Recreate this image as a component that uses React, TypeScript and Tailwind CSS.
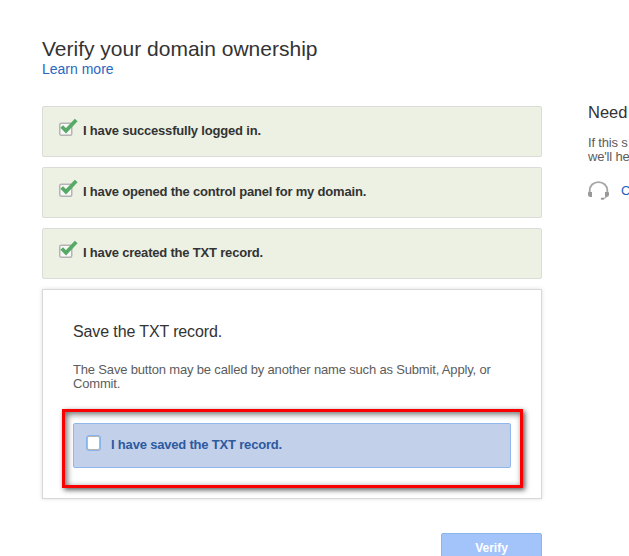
import React from 'react';

const completedSteps = [
  'I have successfully logged in.',
  'I have opened the control panel for my domain.',
  'I have created the TXT record.',
];

const CheckedBox: React.FC = () => (
  <svg className="h-[19px] w-[20px] shrink-0" viewBox="0 0 20 19" fill="none">
    <rect x="1.75" y="5.25" width="12" height="12" rx="1.5" fill="#f8f8f7" stroke="#b4b4b4" strokeWidth="1.5" />
    <path d="M3.7 8.5L8 12.8L18.2 2" stroke="#57a966" strokeWidth="3.8" />
  </svg>
);

const HeadsetIcon: React.FC = () => (
  <svg className="h-[19px] w-[21px] shrink-0" viewBox="0 0 21 19" fill="none">
    <path d="M1.7 12V9.5C1.7 4.6 5.3 1.1 10.5 1.1S19.3 4.6 19.3 9.5V12" stroke="#a8a8a8" strokeWidth="1.9" />
    <path d="M0 12Q0 11 1 11H4V16H2Q0 15.5 0 14ZM21 12Q21 11 20 11H17V16H19Q21 15.5 21 14Z" fill="#999" />
    <path d="M18.5 15.5Q17.5 17.3 14.5 17.6" stroke="#aaa" strokeWidth="1.2" />
    <rect x="12.8" y="16.8" width="3.3" height="2" rx="0.8" fill="#999" />
  </svg>
);

const StepRow: React.FC<{ label: string }> = ({ label }) => (
  <div className="flex h-[51px] items-start rounded-[2px] border border-[#dadcd7] bg-[#edf1e3] pl-[15px] pt-[11px]">
    <CheckedBox />
    <span className="ml-[5px] mt-[5px] text-[13px] leading-[15px] font-bold tracking-[-0.19px] text-[#333]">
      {label}
    </span>
  </div>
);

const SavePanel: React.FC = () => (
  <section className="h-[210px] border border-[#d8d8d8] bg-white px-[19px] pt-8 shadow-[0_0_4px_rgba(0,0,0,0.13)]">
    <h2 className="ml-[11px] text-[16px] leading-[20px] tracking-[-0.12px] text-[#333]">Save the TXT record.</h2>
    <p className="ml-[11px] mt-[21px] w-[430px] text-[13px] leading-[14px] tracking-[-0.17px] text-[#5c5c5c]">
      The Save button may be called by another name such as Submit, Apply, or Commit.
    </p>
    <div className="mt-[18px] h-[79px] w-[461px] border-[3px] border-[#fa0000] px-2 pt-[11px] shadow-[2px_2px_5px_rgba(0,0,0,0.65),inset_2px_2px_6px_rgba(0,0,0,0.6)]">
      <div className="flex h-[45px] w-[438px] items-start rounded-[2px] border border-[#8fb7ee] bg-[#c3d0ea] pl-3 pt-[11px]">
        <span className="h-4 w-[15px] shrink-0 rounded-[3px] border border-[#86b5ec] bg-[#b9b8b6] p-px">
          <span className="block h-full w-full rounded-[1px] bg-white" />
        </span>
        <span className="ml-[10px] mt-[2px] text-[13px] leading-[15px] font-bold tracking-[-0.19px] text-[#2c5a9f]">
          I have saved the TXT record.
        </span>
      </div>
    </div>
  </section>
);

const HelpSidebar: React.FC = () => (
  <aside className="ml-[46px] w-[41px] shrink-0 pt-[102px] whitespace-nowrap">
    <h2 className="text-[16.5px] leading-[20px] text-[#333]">Need</h2>
    <p className="mt-[14px] text-[13px] leading-[14px] tracking-[-0.17px] text-[#5c5c5c]">
      If this s
      <br />
      we'll he
    </p>
    <div className="mt-[17px] flex">
      <HeadsetIcon />
      <span className="ml-3 mt-[2px] text-[13px] leading-4 text-[#2260c4]">C</span>
    </div>
  </aside>
);

const App: React.FC = () => {
  return (
    <div className="flex h-[556px] w-[629px] overflow-hidden bg-white font-['Liberation_Sans',Arial,sans-serif]">
      <main className="ml-[42px] w-[500px] shrink-0 pt-[37px]">
        <h1 className="text-[21px] leading-6 text-[#333]">Verify your domain ownership</h1>
        <a href="#" className="block text-[14px] leading-4 text-[#2868bd]">
          Learn more
        </a>
        <div className="mt-[29px] mb-[10px] flex flex-col gap-[10px]">
          {completedSteps.map((label) => (
            <StepRow key={label} label={label} />
          ))}
        </div>
        <SavePanel />
        <button className="mt-[34px] ml-auto block h-[30px] w-[101px] rounded-[2px] border border-[#8ab6ee] bg-[#a3c4fb] text-[12px] font-bold text-white">
          Verify
        </button>
      </main>
      <HelpSidebar />
    </div>
  );
};

export default App;
